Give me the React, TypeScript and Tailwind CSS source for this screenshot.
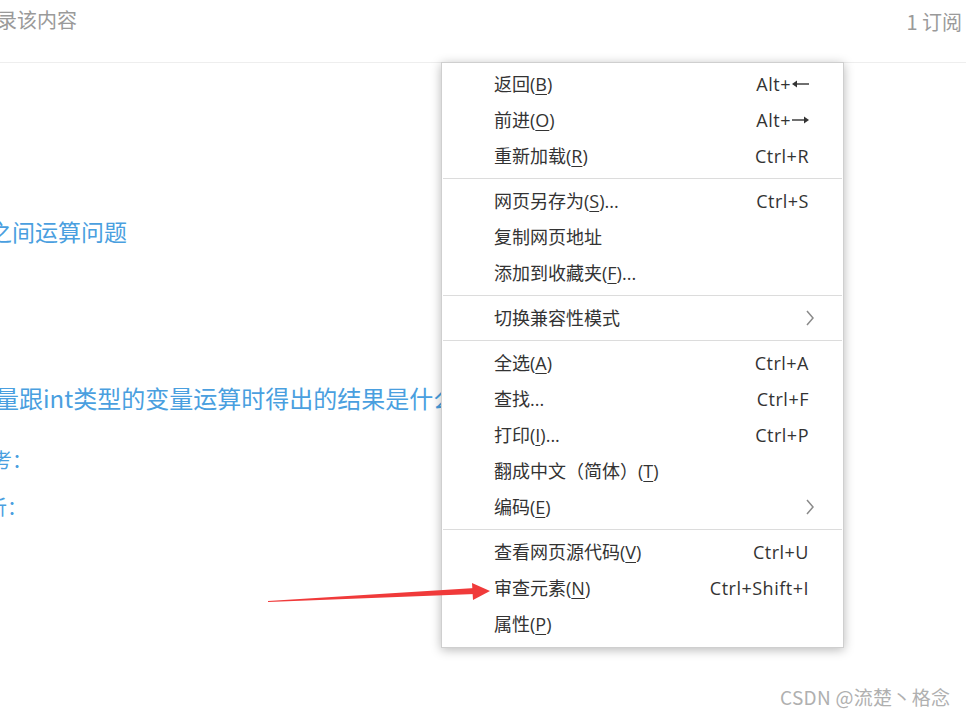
import type { ReactNode } from 'react';

type Item = { label: ReactNode; shortcut?: ReactNode; submenu?: boolean } | 'sep';

const U = ({ children }: { children: ReactNode }) => (
  <span className="underline underline-offset-[3px] decoration-1">{children}</span>
);

function ArrowKey({ dir }: { dir: 'left' | 'right' }) {
  return (
    <svg width="17" height="10" viewBox="0 0 17 10" className="inline-block ml-[1px] -mt-[3px]">
      {dir === 'left' ? (
        <>
          <line x1="3" y1="5" x2="17" y2="5" stroke="#333" strokeWidth="1.4" />
          <path d="M0 5 L5 1.5 L5 8.5 Z" fill="#333" />
        </>
      ) : (
        <>
          <line x1="0" y1="5" x2="14" y2="5" stroke="#333" strokeWidth="1.4" />
          <path d="M17 5 L12 1.5 L12 8.5 Z" fill="#333" />
        </>
      )}
    </svg>
  );
}

const items: Item[] = [
  { label: <>返回(<U>B</U>)</>, shortcut: <>Alt+<ArrowKey dir="left" /></> },
  { label: <>前进(<U>O</U>)</>, shortcut: <>Alt+<ArrowKey dir="right" /></> },
  { label: <>重新加载(<U>R</U>)</>, shortcut: 'Ctrl+R' },
  'sep',
  { label: <>网页另存为(<U>S</U>)...</>, shortcut: 'Ctrl+S' },
  { label: '复制网页地址' },
  { label: <>添加到收藏夹(<U>F</U>)...</> },
  'sep',
  { label: '切换兼容性模式', submenu: true },
  'sep',
  { label: <>全选(<U>A</U>)</>, shortcut: 'Ctrl+A' },
  { label: '查找...', shortcut: 'Ctrl+F' },
  { label: <>打印(<U>I</U>)...</>, shortcut: 'Ctrl+P' },
  { label: <>翻成中文（简体）(<U>T</U>)</> },
  { label: <>编码(<U>E</U>)</>, submenu: true },
  'sep',
  { label: <>查看网页源代码(<U>V</U>)</>, shortcut: 'Ctrl+U' },
  { label: <>审查元素(<U>N</U>)</>, shortcut: 'Ctrl+Shift+I' },
  { label: <>属性(<U>P</U>)</> },
];

function ContextMenu() {
  return (
    <div className="absolute left-[441px] top-[62px] w-[403px] bg-white border border-[#cfcfcf] shadow-[0_2px_10px_rgba(0,0,0,0.28)] pt-[3px] pb-[5px] text-[18px] text-[#333] font-['Open_Sans','Noto_Sans_CJK_SC',sans-serif]">
      {items.map((it, i) =>
        it === 'sep' ? (
          <div key={i} className="h-[9px] flex items-center px-[1px]">
            <div className="h-px w-full bg-[#dcdcdc]" />
          </div>
        ) : (
          <div key={i} className="h-[36px] flex items-center justify-between pl-[52px] pr-[34px]">
            <span className="whitespace-nowrap">{it.label}</span>
            {it.shortcut && <span className="whitespace-nowrap tracking-[0.5px]">{it.shortcut}</span>}
            {it.submenu && (
              <svg width="10" height="16" viewBox="0 0 10 16" className="-mr-[6px]">
                <polyline points="2,1 8,8 2,15" fill="none" stroke="#8a8a8a" strokeWidth="1.5" />
              </svg>
            )}
          </div>
        )
      )}
    </div>
  );
}

export default function App() {
  return (
    <div className="relative w-[966px] h-[715px] overflow-hidden bg-white font-['Noto_Sans_CJK_SC',sans-serif]">
      {/* page header */}
      <div className="h-[63px] flex justify-between items-start border-b border-[#eeeeee]">
        <span className="-ml-[3px] mt-[6px] text-[20px] leading-[28px] text-[#9a9a9a] whitespace-nowrap">录该内容</span>
        <span className="mr-[4px] mt-[8px] text-[20px] leading-[28px] text-[#9a9a9a] whitespace-nowrap">1 订阅</span>
      </div>

      {/* article content */}
      <div className="flex flex-col text-[#4a9fdf]">
        <div className="-ml-[11px] mt-[152px] text-[23px] leading-[32px] whitespace-nowrap">之间运算问题</div>
        <div className="-ml-[5px] mt-[135px] text-[24px] leading-[32px] whitespace-nowrap">
          量跟int类型的变量运算时得出的结果是什么？
        </div>
        <div className="-ml-[8px] mt-[31px] text-[20px] leading-[30px] whitespace-nowrap">考：</div>
        <div className="-ml-[13px] mt-[17px] text-[20px] leading-[30px] whitespace-nowrap">析：</div>
      </div>

      <ContextMenu />

      {/* annotation arrow */}
      <svg className="absolute left-0 top-0 pointer-events-none" width="966" height="715">
        <polygon points="268,601 475,588 475,594 268,602" fill="#f03a3a" />
        <polygon points="472,583 490,591 473,600" fill="#f03a3a" />
      </svg>

      {/* watermark */}
      <div className="absolute left-[780px] top-[684px] text-[19px] leading-[26px] tracking-[0.3px] text-[#b0b0b0] whitespace-nowrap [text-shadow:0_0_2px_#fff]">
        CSDN @流楚丶格念
      </div>
    </div>
  );
}
